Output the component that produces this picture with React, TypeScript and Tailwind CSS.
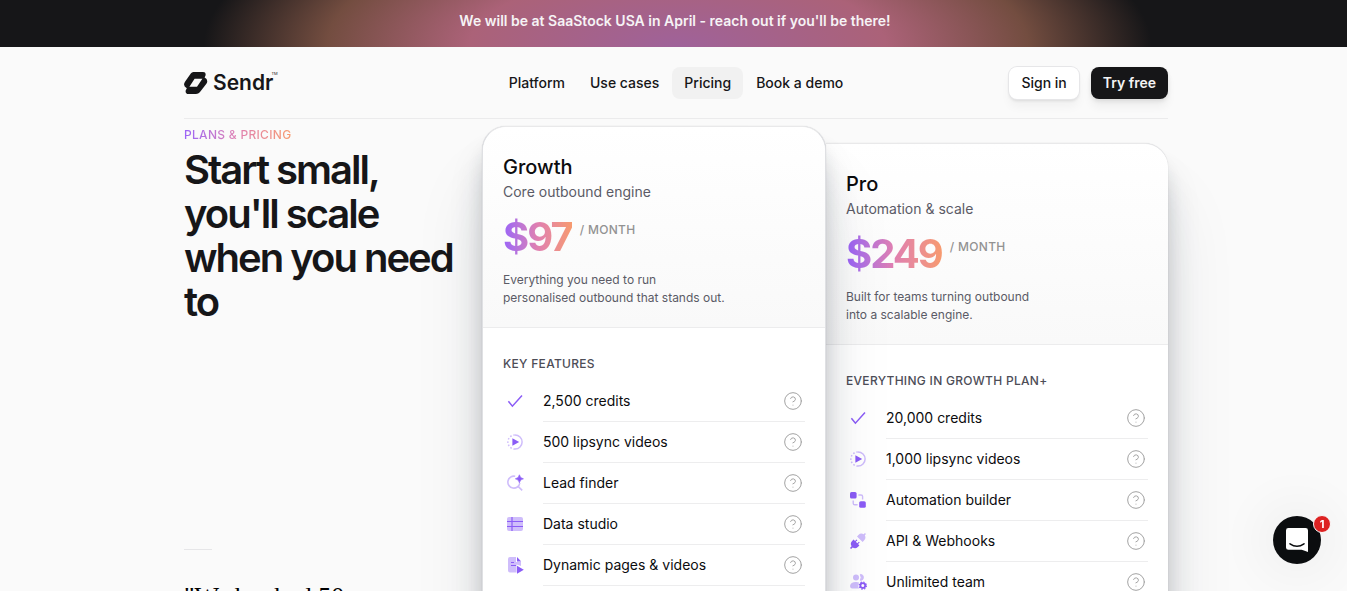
import { CircleHelp } from "lucide-react";
import type { ReactNode } from "react";

const SANS = "font-['Inter','Liberation_Sans',sans-serif]";
const RAINBOW =
  "bg-gradient-to-r from-[#9b63f8] via-[#e07fb0] to-[#f79a6e] bg-clip-text text-transparent";

type IconName =
  | "check"
  | "play"
  | "finder"
  | "table"
  | "page"
  | "flow"
  | "plug"
  | "team";

const DARK = "#8b5cf6";
const PALE = "#cfbdfb";

const ICONS: Record<IconName, ReactNode> = {
  check: <path d="M1.4 8.2 L5.4 13.2 L15 2.4" fill="none" stroke={DARK} strokeWidth="1.5" />,
  play: (
    <>
      <path d="M8 .9 A7.1 7.1 0 0 1 8 15.1" fill="none" stroke={PALE} strokeWidth="1.5" />
      <path
        d="M8 15.1 A7.1 7.1 0 0 1 8 .9"
        fill="none"
        stroke={PALE}
        strokeWidth="1.5"
        strokeDasharray="1.6 1.8"
      />
      <path d="M5.4 4.2 V11.8 L12.2 8 Z" fill={DARK} />
    </>
  ),
  finder: (
    <>
      <path
        d="M8.2 1.3 A6 6 0 1 0 12.8 8 M10.8 11.1 L15.2 15.4"
        fill="none"
        stroke={PALE}
        strokeWidth="1.6"
      />
      <path
        d="M12.4 -.2 Q12.9 3.3 16.4 3.8 Q12.9 4.3 12.4 7.8 Q11.9 4.3 8.4 3.8 Q11.9 3.3 12.4 -.2 Z"
        fill={DARK}
        stroke={DARK}
        strokeWidth=".7"
      />
    </>
  ),
  table: (
    <>
      <rect x="0" y="1" width="16" height="14" rx="2" fill={PALE} />
      <path d="M0 5.5 H16 M0 10.5 H16 M5 1 V15" stroke={DARK} strokeWidth="1.2" fill="none" />
    </>
  ),
  page: (
    <>
      <path
        d="M3 0 H9 V5 H14 V9 L9.6 7.6 V15.6 H3 A2 2 0 0 1 1 13.6 V2 A2 2 0 0 1 3 0 Z"
        fill={PALE}
      />
      <path d="M10 0 L14.2 4.4 H10 Z" fill={DARK} />
      <path d="M4 5.5 H7 M4 8.5 H9" stroke={DARK} strokeWidth="1.2" />
      <path d="M10 8.8 L16.8 12.8 L10 16.8 Z" fill={DARK} />
    </>
  ),
  flow: (
    <>
      <rect x="0" y="0" width="6.6" height="6.6" rx="1.6" fill={DARK} />
      <rect x="9.2" y="9.2" width="6.6" height="6.6" rx="1.6" fill={DARK} />
      <path
        d="M8.4 3 H11 Q12.6 3 12.6 4.6 V7.4 M7.6 12.8 H4.8 Q3.2 12.8 3.2 11.2 V8.4"
        fill="none"
        stroke={PALE}
        strokeWidth="1.4"
      />
    </>
  ),
  plug: (
    <>
      <path
        d="M14.9 0 L16 1.1 L14.8 2.3 A4.4 4.4 0 0 1 14 7.6 L12.6 9 L7 3.4 L8.4 2 A4.4 4.4 0 0 1 13.7 1.2 Z"
        fill={PALE}
      />
      <path
        d="M3.6 6.6 L5 8 L6.6 6.4 L7.4 7.2 L5.8 8.8 L7.3 10.3 L8.9 8.7 L9.7 9.5 L8.1 11.1 L9.4 12.4 L7.8 13.9 A4.2 4.2 0 0 1 2.7 14.4 L1.1 16 L0 14.9 L1.6 13.3 A4.2 4.2 0 0 1 2.1 8.1 Z"
        fill={DARK}
      />
    </>
  ),
  team: (
    <>
      <circle cx="6" cy="3.4" r="3" fill={PALE} />
      <path d="M10.4 .4 A3 3 0 0 1 10.4 6.4 Q12 3.4 10.4 .4 Z" fill={PALE} stroke={PALE} />
      <path d="M0 12 Q.6 8 6 8 Q8 8 9 8.6 Q7.4 11.6 9 14.6 H2 Q0 14.4 0 12 Z" fill={PALE} />
      <circle cx="12.8" cy="11.6" r="2.4" fill="none" stroke={DARK} strokeWidth="1.8" />
      <circle
        cx="12.8"
        cy="11.6"
        r="3.6"
        fill="none"
        stroke={DARK}
        strokeWidth="1.2"
        strokeDasharray="1.4 1.43"
      />
    </>
  ),
};

type Feature = { icon: IconName; label: string };

type Plan = {
  name: string;
  tagline: string;
  price: string;
  blurb: [string, string];
  heading: string;
  features: Feature[];
};

const GROWTH: Plan = {
  name: "Growth",
  tagline: "Core outbound engine",
  price: "$97",
  blurb: ["Everything you need to run", "personalised outbound that stands out."],
  heading: "KEY FEATURES",
  features: [
    { icon: "check", label: "2,500 credits" },
    { icon: "play", label: "500 lipsync videos" },
    { icon: "finder", label: "Lead finder" },
    { icon: "table", label: "Data studio" },
    { icon: "page", label: "Dynamic pages & videos" },
  ],
};

const PRO: Plan = {
  name: "Pro",
  tagline: "Automation & scale",
  price: "$249",
  blurb: ["Built for teams turning outbound", "into a scalable engine."],
  heading: "EVERYTHING IN GROWTH PLAN+",
  features: [
    { icon: "check", label: "20,000 credits" },
    { icon: "play", label: "1,000 lipsync videos" },
    { icon: "flow", label: "Automation builder" },
    { icon: "plug", label: "API & Webhooks" },
    { icon: "team", label: "Unlimited team" },
  ],
};

function PlanCard({ plan, className }: { plan: Plan; className: string }) {
  return (
    <article
      className={`flex min-h-[600px] min-w-0 flex-1 flex-col border-t border-t-[#e9e9ea] bg-white shadow-[0_0_1px_#0f172a38,0_16px_16px_#1f293718,0_32px_32px_#1f29372b,0_60px_70px_#1f29371a] ${className}`}
    >
      <header className="rounded-t-[inherit] border-b border-[#ececed] bg-gradient-to-b from-white to-[#f9f9f9] px-5 pt-[26px] pb-5">
        <h2 className="text-xl leading-7 font-medium text-[#0c0c0e]">{plan.name}</h2>
        <p className="mt-px text-sm leading-5 text-[#5b5b66]">{plan.tagline}</p>
        <div className="mt-3 flex items-start gap-2">
          <span className={`text-[40px] leading-[45px] font-bold tracking-tighter ${RAINBOW}`}>{plan.price}</span>
          <span className="mt-[7px] text-xs leading-[18px] font-medium tracking-wide text-[#929292]">/ MONTH</span>
        </div>
        <p className="mt-3 text-xs leading-[18px] text-[#5b5b66]">
          {plan.blurb[0]}
          <br />
          {plan.blurb[1]}
        </p>
      </header>
      <div className="flex-1 px-5 pt-[27px]">
        <h3 className="text-xs leading-[18px] font-medium tracking-wide text-[#4d4d57]">{plan.heading}</h3>
        <ul className="mt-2">
          {plan.features.map((f) => (
            <li key={f.label} className="flex items-center">
              <span className="flex w-10 shrink-0 pb-px pl-1">
                <svg className="size-4 overflow-visible" viewBox="0 0 16 16" aria-hidden="true">
                  {ICONS[f.icon]}
                </svg>
              </span>
              <span className="flex h-[41px] flex-1 items-center justify-between border-b border-[#ededee] pr-0.5 text-sm text-[#0c0c0e]">
                {f.label}
                <button type="button" aria-label={`About ${f.label}`} className="text-[#a3a3a3]">
                  <CircleHelp className="size-5" strokeWidth={1.2} />
                </button>
              </span>
            </li>
          ))}
        </ul>
      </div>
    </article>
  );
}

const NAV = ["Platform", "Use cases", "Pricing", "Book a demo"];

function Logo() {
  return (
    <a href="#" aria-label="Sendr" className="flex w-fit items-center gap-[5px] text-[#161618]">
      <svg className="h-[22px] w-6" viewBox="0 0 24 22" aria-hidden="true">
        <path
          d="M9.4 0 H19 Q22 0 21.6 3.2 L20.6 5.6 Q24.8 7.8 22.4 11.8 L15.8 20.2 Q14.4 22 12 22 H4.4 Q1.4 22 1.6 18.8 L2.8 16.2 Q-1.6 13.8 1 9.8 L6.8 1.6 Q7.8 0 9.4 0 Z M10.6 6.8 L5.4 14.8 H13 L18.4 6.8 Z"
          fill="currentColor"
          fillRule="evenodd"
        />
      </svg>
      <span className="text-[21px] leading-6 font-semibold">Sendr</span>
      <span className="-ml-[7px] self-start text-[4px] leading-[6px]">TM</span>
    </a>
  );
}

export default function App() {
  return (
    <div className={`relative h-screen overflow-hidden bg-[#fafafa] text-[#161618] ${SANS}`}>
      <div className="h-[47px] bg-[#161618] bg-[radial-gradient(474px_170px_at_50.3%_100%,#9f629a_0%,#ab6278_44%,#734d40_74%,#161618_100%)] pt-2.5 pl-[3px] text-center text-sm leading-[22px] font-semibold text-[#f6f3f5]">
        We will be at SaaStock USA in April - reach out if you'll be there!
      </div>
      <div className="pl-[5px]">
        <div className="mx-auto max-w-[984px]">
          <header className="flex h-[72px] items-center justify-between border-b border-[#ebebec]">
            <div className="flex-1">
              <Logo />
            </div>
            <nav className="flex gap-px text-sm font-medium">
              {NAV.map((item) => (
                <a
                  key={item}
                  href="#"
                  className={`flex h-8 items-center rounded-lg px-3 ${item === "Pricing" ? "bg-[#f1f1f1]" : ""}`}
                >
                  {item}
                </a>
              ))}
            </nav>
            <div className="flex flex-1 justify-end gap-3 text-sm">
              <a
                href="#"
                className="flex h-8 items-center rounded-lg bg-white px-3 font-medium shadow-[0_0_0_1px_#e6e6e8,0_2px_3px_#00000018,0_8px_10px_#0000000a]"
              >
                Sign in
              </a>
              <a
                href="#"
                className="flex h-8 items-center rounded-lg bg-[#161618] px-3 font-semibold text-[#f4f4f4] shadow-[0_2px_4px_#00000018,0_8px_10px_#0000000c]"
              >
                Try free
              </a>
            </div>
          </header>
          <main className="flex items-start">
            <section className="w-[298px] shrink-0 pt-[7px]">
              <p className={`w-fit text-xs leading-[18px] font-medium tracking-wide ${RAINBOW}`}>PLANS &amp; PRICING</p>
              <h1 className="mt-1 max-w-[284px] text-[40px] leading-[44px] font-semibold tracking-tighter">
                Start small, you'll scale when you need to
              </h1>
              <div className="mt-[225px] h-px w-7 bg-[#e6e6e8]" />
              <blockquote className="mt-[31px] font-['Liberation_Serif',serif] text-[26px] leading-8 text-black">
                "We booked 50
              </blockquote>
            </section>
            <section className="flex min-w-0 flex-1 pt-[7px]">
              <PlanCard
                plan={GROWTH}
                className="z-10 rounded-t-3xl border-x border-x-[#dfe0e3]"
              />
              <PlanCard plan={PRO} className="mt-[17px] rounded-tr-3xl" />
            </section>
          </main>
        </div>
      </div>
      <button
        type="button"
        aria-label="Open chat, 1 unread message"
        className="fixed right-[26px] bottom-[27px] z-20 flex size-12 items-center justify-center rounded-full bg-[#0b0d0f] shadow-[0_0_50px_16px_#0000000a]"
      >
        <svg className="h-6 w-[22px]" viewBox="0 0 22 24" aria-hidden="true">
          <path d="M2.4 0 H19.6 Q22 0 22 2.4 V24 Q18.4 22.6 15.6 21.8 H2.4 Q0 21.8 0 19.4 V2.4 Q0 0 2.4 0 Z" fill="#fff" />
          <path d="M4 15.8 Q11 20.8 18 15.8" fill="none" stroke="#0b0d0f" strokeWidth="1.5" strokeLinecap="round" />
        </svg>
        <span className="absolute -top-px -right-2.5 flex size-[18px] items-center justify-center rounded-full border border-[#fafafa] bg-[#dd2222] text-[11px] font-bold text-white">
          1
        </span>
      </button>
    </div>
  );
}
